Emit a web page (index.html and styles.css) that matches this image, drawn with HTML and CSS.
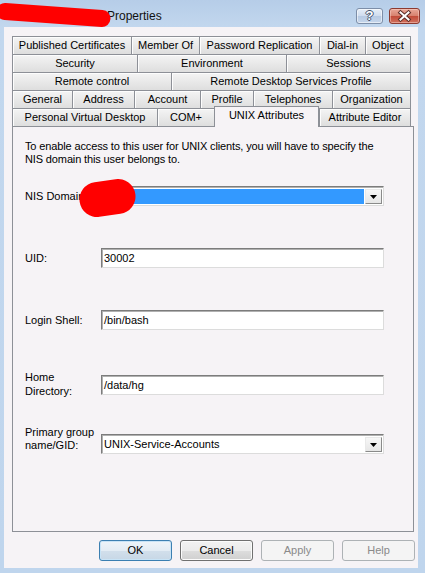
FILE: index.html
```html
<!DOCTYPE html>
<html>
<head>
<meta charset="utf-8">
<title>Properties</title>
<link rel="stylesheet" href="styles.css">
</head>
<body>
<div class="window">
  <div class="titlebar">
    <span class="title">Properties</span>
    <div class="caption-btns">
      <div class="cbtn help"><span class="qmark">?</span></div>
      <div class="cbtn close">
        <svg width="29" height="14" viewBox="0 0 29 14">
          <path d="M10.5 3.5 L18.5 10.5 M18.5 3.5 L10.5 10.5" stroke="#5b2b26" stroke-width="4" stroke-linecap="square" fill="none"/>
          <path d="M10.5 3.5 L18.5 10.5 M18.5 3.5 L10.5 10.5" stroke="#ffffff" stroke-width="2" stroke-linecap="square" fill="none"/>
        </svg>
      </div>
    </div>
  </div>

  <div class="client">
    <div class="tabs">
      <div class="row">
        <div class="tab w119">Published Certificates</div>
        <div class="tab w68">Member Of</div>
        <div class="tab w120">Password Replication</div>
        <div class="tab w46">Dial-in</div>
        <div class="tab w46">Object</div>
      </div>
      <div class="row">
        <div class="tab w125">Security</div>
        <div class="tab w149">Environment</div>
        <div class="tab w125">Sessions</div>
      </div>
      <div class="row">
        <div class="tab w159">Remote control</div>
        <div class="tab w240">Remote Desktop Services Profile</div>
      </div>
      <div class="row">
        <div class="tab w60">General</div>
        <div class="tab w62">Address</div>
        <div class="tab w66">Account</div>
        <div class="tab w53">Profile</div>
        <div class="tab w79">Telephones</div>
        <div class="tab w79">Organization</div>
      </div>
      <div class="row">
        <div class="tab w145">Personal Virtual Desktop</div>
        <div class="tab w57">COM+</div>
        <div class="tab w105 sel">UNIX Attributes</div>
        <div class="tab w92">Attribute Editor</div>
      </div>
    </div>

    <div class="panel">
      <p class="desc">To enable access to this user for UNIX clients, you will have to specify the<br>NIS domain this user belongs to.</p>
      <div class="fields">
        <div class="field">
          <span class="label">NIS Domain:</span>
          <div class="combo">
            <div class="val hl"></div>
            <div class="drop"><svg width="7" height="4" viewBox="0 0 7 4"><path d="M0 0 H7 L3.5 4 Z" fill="#000"/></svg></div>
          </div>
        </div>
        <div class="field">
          <span class="label">UID:</span>
          <div class="textbox">30002</div>
        </div>
        <div class="field">
          <span class="label">Login Shell:</span>
          <div class="textbox">/bin/bash</div>
        </div>
        <div class="field">
          <span class="label two home">Home<br>Directory:</span>
          <div class="textbox">/data/hg</div>
        </div>
        <div class="field">
          <span class="label two grp">Primary group<br>name/GID:</span>
          <div class="combo">
            <div class="val">UNIX-Service-Accounts</div>
            <div class="drop"><svg width="7" height="4" viewBox="0 0 7 4"><path d="M0 0 H7 L3.5 4 Z" fill="#000"/></svg></div>
          </div>
        </div>
      </div>
    </div>

    <div class="actions">
      <div class="btn default">OK</div>
      <div class="btn">Cancel</div>
      <div class="btn disabled">Apply</div>
      <div class="btn disabled">Help</div>
    </div>
  </div>

  <svg class="redact redact-title" width="120" height="30" viewBox="0 0 120 30">
    <path d="M5 11.5 L102 18.5" stroke="#ff0000" stroke-width="17" stroke-linecap="round" fill="none"/>
  </svg>
  <svg class="redact redact-nis" width="64" height="42" viewBox="0 0 64 42">
    <path d="M19 20.5 L40 17.5" stroke="#ff0000" stroke-width="35" stroke-linecap="round" fill="none"/>
  </svg>
</div>
</body>
</html>
```
FILE: styles.css
```css
* { box-sizing: border-box; }

html, body {
  margin: 0;
  padding: 0;
}

body {
  width: 425px;
  height: 573px;
  overflow: hidden;
  background: #bdd3ec;
  font-family: "Liberation Sans", Arial, sans-serif;
  font-size: 11px;
  color: #000;
}

.window {
  position: relative;
  width: 425px;
  height: 573px;
  background: linear-gradient(#b6cde8, #c2d7ee 27px, #bfd5ed);
}

/* Title bar */
.titlebar {
  height: 27px;
  display: flex;
  align-items: flex-start;
}

.title {
  flex: 1;
  margin: 8px 0 0 107px;
  font-size: 12px;
  line-height: 16px;
  color: #111;
}

.caption-btns {
  display: flex;
  gap: 6px;
  margin: 8px 5px 0 0;
}

.cbtn {
  height: 16px;
  border-radius: 3px;
  display: flex;
  align-items: center;
  justify-content: center;
}

.help {
  width: 27px;
  border: 1px solid #7d8ea8;
  background: linear-gradient(#e6eef8, #cfdcee 50%, #b7cae3 51%, #c6d6ec);
  box-shadow: inset 0 0 0 1px rgba(255,255,255,0.55);
}

.qmark {
  font-weight: bold;
  font-size: 13px;
  line-height: 14px;
  color: #fff;
  text-shadow: 1px 0 0 #42546f, -1px 0 0 #42546f, 0 1px 0 #42546f, 0 -1px 0 #42546f;
}

.close {
  width: 31px;
  border: 1px solid #8c3a30;
  background: linear-gradient(#e9a797, #d7806d 50%, #c24a37 51%, #d0705e);
  box-shadow: inset 0 0 0 1px rgba(255,220,210,0.45);
}

/* Client area */
.client {
  margin: 0 7px 0 4px;
  height: 541px;
  background: #f6f3f6;
  padding: 9px 4px 0 8px;
}

.tabs {
  width: 399px;
}

.row {
  display: flex;
  height: 18px;
}

.tab {
  height: 18px;
  flex: none;
  border-top: 1px solid #8d9097;
  border-left: 1px solid #8d9097;
  background: linear-gradient(#f4f4f4, #e9e9e9 50%, #dedede);
  box-shadow: inset 1px 1px 0 #fdfdfd;
  text-align: center;
  line-height: 17px;
  white-space: nowrap;
  overflow: hidden;
}

.tab:last-child {
  border-right: 1px solid #8d9097;
}

.tab.sel {
  margin-top: -2px;
  height: 21px;
  background: #f6f3f6;
  border-right: 1px solid #8d9097;
  box-shadow: none;
  position: relative;
  z-index: 1;
  line-height: 17px;
}

.w46 { width: 46px; }
.w53 { width: 53px; }
.w57 { width: 57px; }
.w60 { width: 60px; }
.w62 { width: 62px; }
.w66 { width: 66px; }
.w68 { width: 68px; }
.w79 { width: 79px; }
.w92 { width: 92px; }
.w105 { width: 105px; }
.w119 { width: 119px; }
.w120 { width: 120px; }
.w125 { width: 125px; }
.w145 { width: 145px; }
.w149 { width: 149px; }
.w159 { width: 159px; }
.w240 { width: 240px; }

/* Panel */
.panel {
  width: 402px;
  height: 406px;
  border: 1px solid #8d9097;
  background: #f6f3f6;
  padding: 13px 0 0 12px;
}

.desc {
  margin: 0;
  line-height: 13px;
  white-space: nowrap;
  letter-spacing: -0.13px;
}

.fields {
  margin-top: 20px;
  display: flex;
  flex-direction: column;
  gap: 42px;
}

.field {
  display: grid;
  grid-template-columns: 76px 283px;
  height: 20px;
  align-items: center;
}

.label {
  line-height: 14px;
  white-space: nowrap;
}

.label.two {
  align-self: start;
}

.label.home {
  margin-top: -2px;
}

.label.grp {
  margin-top: -8px;
  line-height: 13px;
}

.textbox,
.combo {
  height: 20px;
  background: #fff;
  border-style: solid;
  border-width: 1px;
  border-color: #7c7c7c #dcdcdc #dcdcdc #7c7c7c;
  box-shadow: inset 1px 1px 0 #b0b0b0;
}

.textbox {
  padding-left: 2px;
  line-height: 18px;
}

.combo {
  display: flex;
  padding: 2px 1px 1px 2px;
}

.val {
  flex: 1;
  line-height: 15px;
  padding-left: 0;
}

.val.hl {
  background: #3399ff;
  margin-right: 1px;
}

.drop {
  width: 17px;
  height: 15px;
  border: 1px solid;
  border-color: #e9e9e9 #8a8a8a #8a8a8a #e9e9e9;
  background: linear-gradient(#f7f7f7, #e6e6e6);
  display: flex;
  align-items: center;
  justify-content: center;
}

.drop svg {
  display: block;
}

/* Buttons */
.actions {
  display: flex;
  justify-content: flex-end;
  gap: 8px;
  margin: 8px -1px 0 0;
}

.btn {
  width: 73px;
  height: 21px;
  border: 1px solid #707070;
  border-radius: 3px;
  background: linear-gradient(#f2f2f2, #ebebeb 50%, #dddddd 51%, #cfcfcf);
  box-shadow: inset 0 0 0 1px #fbfbfb;
  text-align: center;
  line-height: 19px;
}

.btn.default {
  border-color: #3c7fb1;
  background: linear-gradient(#eef4f9, #e3ecf4 50%, #d2dfeb 51%, #c7d7e6);
  box-shadow: inset 0 0 0 1px #c8e3f6;
}

.btn.disabled {
  border-color: #adb2b5;
  background: #f4f4f4;
  box-shadow: none;
  color: #8a8a8a;
}

/* Redaction marks laid over the screenshot content */
.redact {
  position: absolute;
  pointer-events: none;
}

.redact-title {
  left: 0;
  top: 0;
}

.redact-nis {
  left: 78px;
  top: 179px;
}
```
